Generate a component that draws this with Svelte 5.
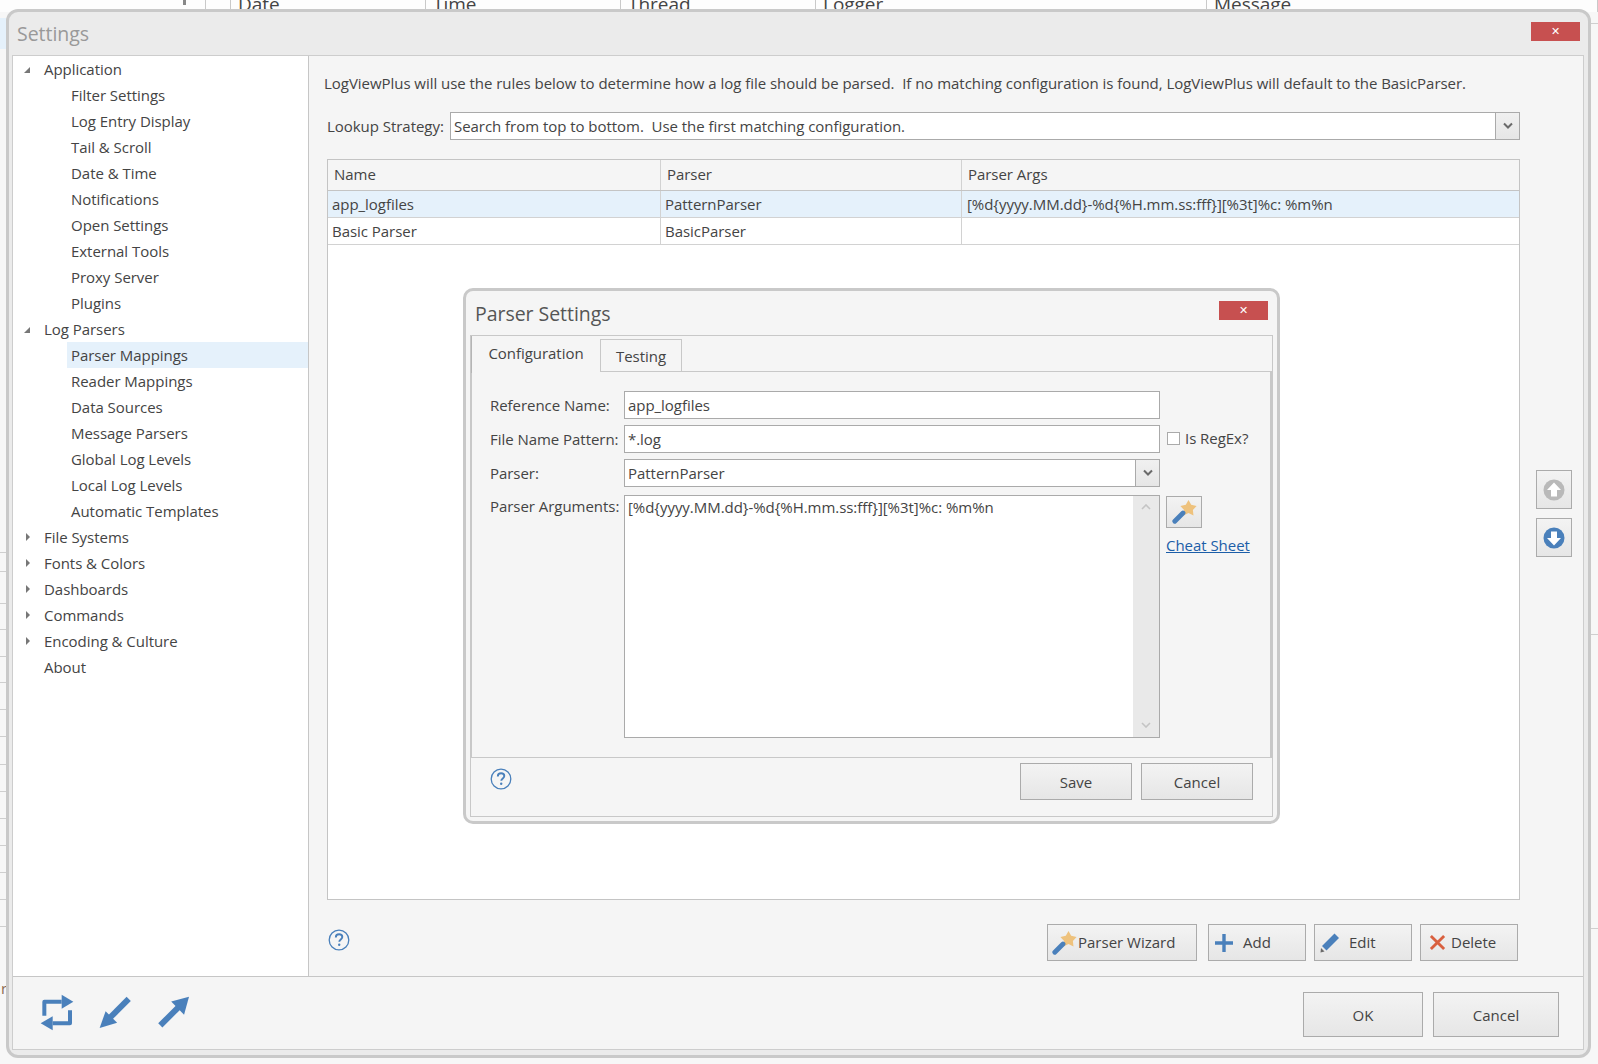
<script>
  const headers = [
    { t: '', w: 206 }, { t: '', w: 25 }, { t: 'Date', w: 195 }, { t: 'Time', w: 195 },
    { t: 'Thread', w: 195 }, { t: 'Logger', w: 391 }, { t: 'Message', w: 391 }
  ];
  const leftRules = [552, 571, 603, 629, 656, 682, 709, 736, 764, 791, 818, 845, 872, 899, 926];
  const rightRules = [23, 634, 928];
  const tree = [
    { t: 'Application', open: true, children: ['Filter Settings', 'Log Entry Display', 'Tail & Scroll', 'Date & Time', 'Notifications', 'Open Settings', 'External Tools', 'Proxy Server', 'Plugins'] },
    { t: 'Log Parsers', open: true, children: ['Parser Mappings', 'Reader Mappings', 'Data Sources', 'Message Parsers', 'Global Log Levels', 'Local Log Levels', 'Automatic Templates'] },
    { t: 'File Systems', closed: true }, { t: 'Fonts & Colors', closed: true }, { t: 'Dashboards', closed: true },
    { t: 'Commands', closed: true }, { t: 'Encoding & Culture', closed: true }, { t: 'About' }
  ];
</script>

{#snippet wand()}
  <svg class="wand" viewBox="0 0 25 24" width="25" height="24">
    <polygon fill="#eec27d" points="16.500,0 19.200,4.800 24.600,5.900 20.900,9.900 21.500,15.400 16.500,13.100 11.500,15.400 12.100,9.900 8.400,5.900 13.800,4.800"/>
    <line x1="2.800" y1="21.200" x2="11" y2="13" stroke="#4a80bb" stroke-width="4.800" stroke-linecap="round"/>
  </svg>
{/snippet}

{#snippet help()}
  <svg viewBox="0 0 22 22" width="22" height="22">
    <circle cx="11" cy="11" r="9.800" fill="none" stroke="#4a80bb" stroke-width="1.300"/>
    <path d="M7.800 8.400c0-2 1.500-3.100 3.300-3.100s3.200 1.100 3.200 2.800c0 2.300-3 2.400-3 4.700" fill="none" stroke="#4a80bb" stroke-width="1.900"/>
    <circle cx="11.200" cy="15.800" r="1.200" fill="#4a80bb"/>
  </svg>
{/snippet}

{#snippet chevron()}
  <svg viewBox="0 0 10 8" width="10" height="8"><path d="M1 1.500L5 5.500L9 1.500" fill="none" stroke="#6a6a6a" stroke-width="2"/></svg>
{/snippet}

<div class="desktop">
  <div class="bg-head">
    {#each headers as h}
      <div class="bg-cell" style="width:{h.w}px">{h.t}</div>
    {/each}
  </div>
  <div class="bg-pin"></div>
  <div class="bg-sel"></div>
  <div class="bg-r">r</div>
  {#each leftRules as y}<div class="bg-rule left" style="top:{y}px"></div>{/each}
  {#each rightRules as y}<div class="bg-rule right" style="top:{y}px"></div>{/each}

  <section class="window">
    <header class="win-title">
      <span>Settings</span>
      <button class="close">✕</button>
    </header>
    <div class="win-body">
      <div class="upper">
        <nav class="tree">
          {#each tree as n}
            <div class="row top">
              {#if n.open}<i class="arr open"></i>{:else if n.closed}<i class="arr closed"></i>{/if}
              {n.t}
            </div>
            {#if n.children}
              {#each n.children as c}
                <div class="row child" class:sel={c === 'Parser Mappings'}>{c}</div>
              {/each}
            {/if}
          {/each}
        </nav>
        <main class="panel">
          <div class="content">
            <p class="intro">LogViewPlus will use the rules below to determine how a log file should be parsed.&nbsp; If no matching configuration is found, LogViewPlus will default to the BasicParser.</p>
            <div class="lookup">
              <span class="lk">Lookup Strategy:</span>
              <div class="combo">
                <span class="val">Search from top to bottom.&nbsp; Use the first matching configuration.</span>
                <span class="drop">{@render chevron()}</span>
              </div>
            </div>
            <div class="table">
              <div class="tr th"><div>Name</div><div>Parser</div><div>Parser Args</div></div>
              <div class="tr sel"><div>app_logfiles</div><div>PatternParser</div><div>[%d&#123;yyyy.MM.dd&#125;-%d&#123;%H.mm.ss:fff&#125;][%3t]%c: %m%n</div></div>
              <div class="tr"><div>Basic Parser</div><div>BasicParser</div><div></div></div>
            </div>
            <div class="actions">
              <span class="help-big">{@render help()}</span>
              <div class="btns">
                <button class="btn wiz">{@render wand()}<span>Parser Wizard</span></button>
                <button class="btn act">
                  <svg viewBox="0 0 20 20" width="20" height="20"><path d="M10 1v18M1 10h18" stroke="#4a80bb" stroke-width="3.400"/></svg>
                  <span>Add</span>
                </button>
                <button class="btn act">
                  <svg viewBox="0 0 20 20" width="20" height="20">
                    <polygon fill="#4a80bb" points="14.500,0.500 19,5 6.500,17.500 2,13"/>
                    <polygon fill="#6a6a6a" points="1,15 4.500,18.500 0.500,19.500"/>
                  </svg>
                  <span>Edit</span>
                </button>
                <button class="btn act del">
                  <svg viewBox="0 0 18 18" width="17" height="17"><path d="M2 2L16 16M16 2L2 16" stroke="#d9603f" stroke-width="3"/></svg>
                  <span>Delete</span>
                </button>
              </div>
            </div>
          </div>
          <aside class="side">
            <button class="btn mv">
              <svg viewBox="0 0 22 22" width="22" height="22">
                <circle cx="11" cy="11" r="10.500" fill="#b9b9b9"/>
                <path d="M11 3.500L18 11H14V17.500H8V11H4Z" fill="#fff"/>
              </svg>
            </button>
            <button class="btn mv">
              <svg viewBox="0 0 22 22" width="22" height="22">
                <circle cx="11" cy="11" r="10.500" fill="#4a80bb"/>
                <path d="M11 18.500L18 11H14V4.500H8V11H4Z" fill="#fff"/>
              </svg>
            </button>
          </aside>
        </main>
      </div>
      <footer class="win-foot">
        <div class="tools">
          <svg viewBox="120 220 102 110" width="34" height="37">
            <path d="M185 243H133V285M158 307H210V268" fill="none" stroke="#4a80bb" stroke-width="12" stroke-linejoin="round"/>
            <polygon fill="#4a80bb" points="185,222 220,243 185,264"/>
            <polygon fill="#4a80bb" points="158,286 122,307 158,328"/>
          </svg>
          <svg viewBox="295 226 100 100" width="33" height="33">
            <line x1="385" y1="235" x2="325" y2="295" stroke="#4a80bb" stroke-width="18"/>
            <polygon fill="#4a80bb" points="297,323 315,272 350,307"/>
          </svg>
          <svg viewBox="470 226 100 100" width="33" height="33">
            <line x1="480" y1="315" x2="540" y2="255" stroke="#4a80bb" stroke-width="18"/>
            <polygon fill="#4a80bb" points="567,228 513,243 552,283"/>
          </svg>
        </div>
        <div class="foot-btns">
          <button class="btn ok">OK</button>
          <button class="btn cancel">Cancel</button>
        </div>
      </footer>
    </div>

    <div class="dialog">
      <header class="dlg-title">
        <span>Parser Settings</span>
        <button class="close">✕</button>
      </header>
      <div class="frame">
        <div class="tabs">
          <div class="tab active">Configuration</div>
          <div class="tab">Testing</div>
        </div>
        <div class="tab-body">
          <div class="form">
            <label for="f1">Reference Name:</label>
            <input id="f1" value="app_logfiles" />
            <span></span>
            <label for="f2">File Name Pattern:</label>
            <input id="f2" value="*.log" />
            <div class="regex"><i class="check"></i>Is RegEx?</div>
            <span class="lbl">Parser:</span>
            <div class="combo small">
              <span class="val">PatternParser</span>
              <span class="drop">{@render chevron()}</span>
            </div>
            <span></span>
            <span class="lbl args">Parser Arguments:</span>
            <div class="area">
              <div class="area-text">[%d&#123;yyyy.MM.dd&#125;-%d&#123;%H.mm.ss:fff&#125;][%3t]%c: %m%n</div>
              <div class="scroll">
                <svg viewBox="0 0 10 6" width="10" height="6"><path d="M1 5L5 1L9 5" fill="none" stroke="#c4c4c4" stroke-width="1.600"/></svg>
                <svg viewBox="0 0 10 6" width="10" height="6"><path d="M1 1L5 5L9 1" fill="none" stroke="#c4c4c4" stroke-width="1.600"/></svg>
              </div>
            </div>
            <div class="extras">
              <button class="btn wandbtn">{@render wand()}</button>
              <a href="#cheat" class="cheat">Cheat Sheet</a>
            </div>
          </div>
        </div>
        <div class="dlg-foot">
          <span class="help-small">{@render help()}</span>
          <div class="dlg-btns">
            <button class="btn dlg">Save</button>
            <button class="btn dlg">Cancel</button>
          </div>
        </div>
      </div>
    </div>
  </section>
</div>

<style>
  :global(body) { margin: 0; background: #f7f7f7; }
  * { box-sizing: border-box; }
  .desktop {
    position: relative; width: 1598px; height: 1064px; overflow: hidden;
    font-family: "Open Sans", "Noto Sans", sans-serif; font-size: 15px; letter-spacing: -0.04px; color: #444;
  }
  .bg-head { display: flex; height: 12px; background: #fdfdfd; }
  .bg-cell { height: 12px; border-right: 1px solid #c9c9c9; padding-left: 7px; font-size: 19px; line-height: 8px; overflow: hidden; }
  .bg-pin { position: absolute; left: 183px; top: 0; width: 3px; height: 5px; background: #888; }
  .bg-sel { position: absolute; left: 0; top: 18px; width: 6px; height: 31px; background: #e5f1fb; }
  .bg-r { position: absolute; left: 1px; top: 978px; font-size: 15px; color: #8a6a50; }
  .bg-rule { position: absolute; height: 1px; background: #cfcfcf; }
  .bg-rule.left { left: 0; width: 6px; }
  .bg-rule.right { left: 1591px; width: 7px; }

  .window {
    position: absolute; left: 6px; top: 9px; width: 1585px; height: 1049px;
    border: 3px solid #c9c9c9; border-radius: 12px; background: #ebebeb;
    display: flex; flex-direction: column;
  }
  .win-title {
    height: 43px; flex: none; display: flex; align-items: flex-start; justify-content: space-between;
    padding: 8px 8px 0 8px; font-size: 19.500px; color: #999; line-height: 28px;
  }
  .close {
    width: 49px; height: 19px; margin-top: 2px; border: 0; background: #c75050; color: #fff; padding: 0;
    font: 700 11px/19px "DejaVu Sans", sans-serif; text-align: center;
  }
  .win-body {
    flex: 1; margin: 0 4px 5px 3px; border: 1px solid #cdcdcd; background: #f5f5f5;
    display: flex; flex-direction: column; min-height: 0;
  }
  .upper { flex: none; height: 921px; display: flex; border-bottom: 1px solid #c6c6c6; }
  .tree { width: 296px; flex: none; background: #fff; border-right: 1px solid #c6c6c6; }
  .row { height: 26px; line-height: 26px; white-space: nowrap; position: relative; }
  .row.top { padding-left: 31px; }
  .row.child { margin-left: 54px; padding-left: 4px; }
  .row.sel { background: #e5f1fb; }
  .arr { position: absolute; left: 11px; top: 9px; width: 0; height: 0; }
  .arr.open { border-left: 6px solid transparent; border-bottom: 6px solid #777; top: 11px; left: 11px; }
  .arr.closed { border-left: 4px solid #777; border-top: 4px solid transparent; border-bottom: 4px solid transparent; left: 13px; }

  .panel { flex: 1; display: flex; padding-left: 18px; min-width: 0; }
  .content { width: 1193px; flex: none; display: flex; flex-direction: column; }
  .intro { margin: 13px 0 0 -3px; height: 28px; line-height: 28px; white-space: nowrap; }
  .lookup { display: flex; align-items: center; margin-top: 15px; height: 28px; }
  .lk { width: 123px; flex: none; white-space: nowrap; }
  .combo { flex: 1; height: 28px; display: flex; background: #fff; border: 1px solid #aaa; }
  .val { flex: 1; padding-left: 3px; line-height: 26px; white-space: nowrap; }
  .drop { width: 24px; flex: none; border-left: 1px solid #aaa; background: linear-gradient(#f0f0f0, #e6e6e6); display: flex; align-items: center; justify-content: center; }
  .table { margin-top: 19px; height: 741px; background: #fff; border: 1px solid #c4c4c4; flex: none; }
  .tr { display: grid; grid-template-columns: 333px 301px 1fr; height: 27px; line-height: 26px; border-bottom: 1px solid #d2d2d2; }
  .tr > div { border-right: 1px solid #d2d2d2; padding-left: 4px; white-space: nowrap; overflow: hidden; }
  .tr > div:last-child { border-right: 0; padding-left: 5px; }
  .tr.th { height: 31px; line-height: 28px; background: #f5f5f5; border-bottom-color: #c4c4c4; }
  .tr.th > div { padding-left: 6px; }
  .tr.sel { background: #e5f1fb; }
  .actions { flex: 1; display: flex; justify-content: space-between; align-items: flex-start; padding-top: 24px; }
  .help-big { margin-left: 1px; margin-top: 5px; display: block; line-height: 0; }
  .btns { display: flex; margin-right: 2px; }
  .btn {
    border: 1px solid #ababab; background: linear-gradient(#f3f3f3, #e6e6e6); color: #444;
    font: inherit; padding: 0; height: 37px; display: flex; align-items: center; justify-content: center;
  }
  .btn span { position: relative; top: -1px; }
  .wiz { width: 150px; margin-right: 11px; justify-content: flex-start; padding-left: 4px; gap: 1px; }
  .act { width: 98px; margin-right: 8px; justify-content: flex-start; padding-left: 5px; gap: 9px; }
  .act:last-child { margin-right: 0; }
  .del { gap: 5px; padding-left: 8px; }
  .side { padding: 414px 0 0 16px; display: flex; flex-direction: column; gap: 9px; }
  .mv { width: 36px; height: 39px; }

  .win-foot { flex: 1; display: flex; justify-content: space-between; align-items: flex-start; }
  .tools { display: flex; align-items: center; gap: 25px; padding: 17px 0 0 27px; }
  .foot-btns { display: flex; gap: 10px; padding: 15px 24px 0 0; }
  .ok { width: 120px; height: 45px; }
  .cancel { width: 126px; height: 45px; }

  .dialog {
    position: absolute; left: 454px; top: 276px; width: 817px; height: 536px;
    border: 3px solid #c9c9c9; border-radius: 10px; background: #f5f5f5;
    display: flex; flex-direction: column;
  }
  .dlg-title {
    height: 44px; flex: none; display: flex; justify-content: space-between; align-items: flex-start;
    padding: 8px 9px 0 9px; font-size: 19.500px; line-height: 30px; color: #555;
  }
  .frame { flex: 1; margin: 0 4px 4px 4px; border: 1px solid #c8c8c8; display: flex; flex-direction: column; min-height: 0; }
  .tabs { height: 36px; flex: none; display: flex; align-items: flex-end; }
  .tab { width: 82px; height: 33px; border: 1px solid #c8c8c8; border-bottom: 0; text-align: center; line-height: 33px; }
  .tab.active { width: 129px; border: 0; border-left: 1px solid #b5b5b5; line-height: 34px; position: relative; z-index: 1; background: #f5f5f5; margin-bottom: -1px; height: 37px; }
  .tab-body { height: 387px; flex: none; border: 1px solid #c8c8c8; border-width: 1px 2px 1px 1px; padding: 19px 0 0 18px; margin-top: -1px; position: relative; }
  .form { display: grid; grid-template-columns: 134px 536px 1fr; grid-template-rows: 28px 28px 28px 243px; row-gap: 6px; align-items: center; }
  .form label, .lbl { white-space: nowrap; }
  .form input {
    height: 28px; width: 100%; border: 1px solid #aaa; background: #fff; padding: 0 3px;
    font: inherit; letter-spacing: inherit; color: #444; outline: none;
  }
  .combo.small { flex: none; height: 28px; }
  .regex { display: flex; align-items: center; padding-left: 7px; white-space: nowrap; margin-top: -2px; }
  .check { width: 13px; height: 13px; border: 1px solid #aaa; background: #fff; margin-right: 5px; }
  .args { align-self: start; margin-top: 3px; }
  .area { grid-column: 2; height: 243px; margin-top: 2px; align-self: start; display: flex; border: 1px solid #aaa; background: #fff; }
  .area-text { flex: 1; padding: 1px 3px; white-space: nowrap; }
  .scroll { width: 26px; background: #e9e9e9; display: flex; flex-direction: column; justify-content: space-between; align-items: center; padding: 8px 0 9px; }
  .extras { align-self: start; padding-left: 6px; margin-top: 3px; }
  .wandbtn { width: 36px; height: 32px; }
  .cheat { display: block; margin-top: 7px; color: #1c5ea8; white-space: nowrap; }
  .dlg-foot { flex: 1; display: flex; justify-content: space-between; align-items: flex-start; padding: 5px 19px 0 19px; }
  .help-small { margin-top: 5px; line-height: 0; display: block; }
  .dlg-btns { display: flex; gap: 9px; }
  .dlg { width: 112px; height: 37px; }
</style>
